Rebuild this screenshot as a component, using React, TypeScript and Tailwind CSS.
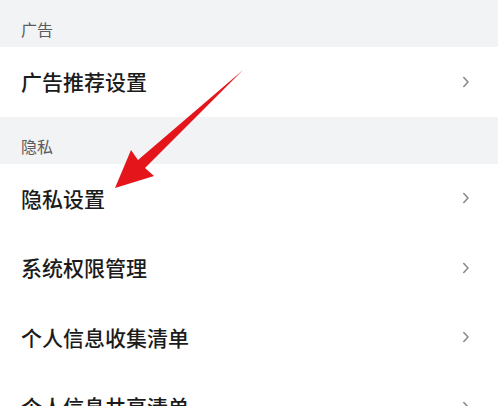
const font = { fontFamily: '"Noto Sans CJK SC", "Noto Sans", sans-serif' };

function Chevron() {
  return (
    <svg width="8" height="12" viewBox="0 0 8 12" fill="none">
      <path d="M1.8 1.5 L6 6 L1.8 10.5" stroke="#8a8a8a" strokeWidth="1.6" strokeLinecap="round" strokeLinejoin="round" />
    </svg>
  );
}

function Header({ title }: { title: string }) {
  return (
    <div className="h-[47px] flex items-end pb-[6px] px-[21px] bg-[#f2f3f5]">
      <span className="text-[16px] leading-[24px] text-[#5c5c5c]">{title}</span>
    </div>
  );
}

function Row({ title }: { title: string }) {
  return (
    <div className="h-[69.5px] flex items-center justify-between pl-[21px] pr-[28px] bg-white">
      <span className="text-[21px] font-medium text-[#1b1b1b]">{title}</span>
      <Chevron />
    </div>
  );
}

export default function App() {
  return (
    <div className="relative w-[498px] h-[406px] overflow-hidden bg-white" style={font}>
      <Header title="广告" />
      <Row title="广告推荐设置" />
      <Header title="隐私" />
      <Row title="隐私设置" />
      <Row title="系统权限管理" />
      <Row title="个人信息收集清单" />
      <Row title="个人信息共享清单" />

      {/* annotation arrow */}
      <svg className="absolute left-0 top-0 pointer-events-none" width="498" height="406" viewBox="0 0 498 406">
        <polygon
          points="243,70 145,168 154,176 115,188 131,150 138,160"
          fill="#e5161b"
        />
      </svg>
    </div>
  );
}
